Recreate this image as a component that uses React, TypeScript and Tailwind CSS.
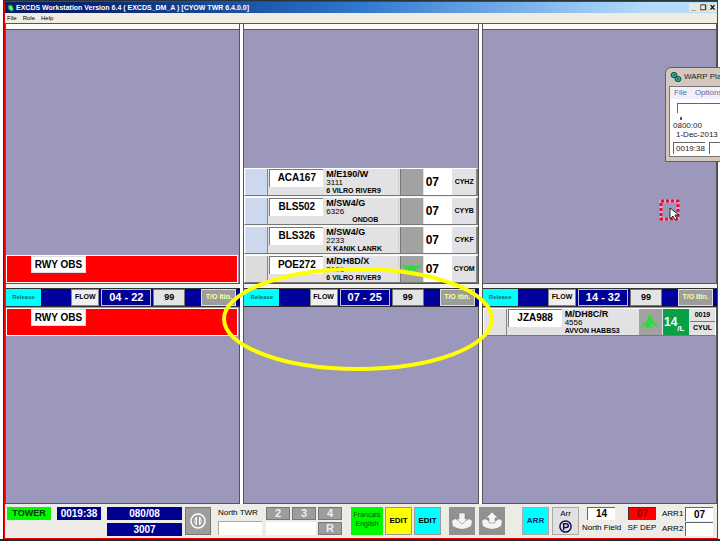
import React from 'react';

type Strip = { callsign: string; type: string; code: string; route: string; dest: string; blue?: boolean; plane?: boolean };

const strips: Strip[] = [
  { callsign: 'ACA167', type: 'M/E190/W', code: '3111', route: '6 VILRO RIVER9', dest: 'CYHZ', blue: true },
  { callsign: 'BLS502', type: 'M/SW4/G', code: '6326', route: 'ONDOB', dest: 'CYYB', blue: true },
  { callsign: 'BLS326', type: 'M/SW4/G', code: '2233', route: 'K KANIK LANRK', dest: 'CYKF', blue: true },
  { callsign: 'POE272', type: 'M/DH8D/X', code: '3103', route: '6 VILRO RIVER9', dest: 'CYOM', plane: true },
];

function ParkedPlane() {
  return (
    <svg viewBox="0 0 20 8" className="h-2 w-5" fill="#2ddb3c">
      <path d="M0 0 L6 2 L10 1 L14 2 L20 0 L17 4 L13 5 L16 8 L10 6 L4 8 L6 5 L2 4 Z" />
    </svg>
  );
}

function Plane() {
  return (
    <svg viewBox="0 0 18 16" className="h-4 w-[18px]" fill="#2ddb3c">
      <path d="M8 0 L11 3 L12 7 L17 11 L16 13 L11 10 L10 12 L13 15 L8 13 L5 15 L5 11 L1 13 L1 11 L6 7 Z" />
    </svg>
  );
}

function Callsign({ children }: { children: string }) {
  return (
    <div className="h-[18px] w-[54px] shrink-0 border-t border-l border-[#777] bg-white text-center text-[10px] font-bold leading-[16px]">
      {children}
    </div>
  );
}

function StripInfo({ type, code, route }: { type: string; code: string; route: string }) {
  return (
    <div className="w-[54px] shrink-0 whitespace-nowrap pl-0.5 font-bold">
      <div className="text-[9px] leading-[10px]">{type}</div>
      <div className="text-[8px] font-medium leading-[8px]">{code}</div>
      <div className={route === 'ONDOB' ? 'text-right text-[7px] leading-[8px]' : 'text-[7px] leading-[8px]'}>{route}</div>
    </div>
  );
}

function FlightStrip({ strip }: { strip: Strip }) {
  return (
    <div className="flex min-h-0 flex-1 gap-px border border-t-white border-r-[#777] border-b-[#777] border-l-white bg-[#e2e2e4] pl-px">
      <div className={strip.blue ? 'w-[22px] shrink-0 border-r border-[#888] bg-[#cbd8ee]' : 'w-[22px] shrink-0 border-r border-[#888] bg-[#dcdcdc]'} />
      <Callsign>{strip.callsign}</Callsign>
      <StripInfo type={strip.type} code={strip.code} route={strip.route} />
      <div className="flex-1 border-r border-[#d0d0d0]" />
      <div className="flex w-[23px] shrink-0 justify-center border-l border-[#777] bg-[#a2a2a2] pt-2">
        {strip.plane && <ParkedPlane />}
      </div>
      <div className="flex w-[28px] shrink-0 items-center bg-white pl-0.5 text-[12px] font-bold">07</div>
      <div className="flex w-[24px] shrink-0 items-center justify-center border-r border-[#888] text-[7px] font-bold">{strip.dest}</div>
    </div>
  );
}

function Obstruction() {
  return (
    <div className="mr-px h-7 shrink-0 border border-white bg-[#fe0000] pl-6">
      <div className="h-[17px] w-[55px] border border-[#ddd] bg-white text-center text-[10px] font-bold leading-[16px]">RWY OBS</div>
    </div>
  );
}

function RunwayBar({ runway }: { runway: string }) {
  return (
    <div className="flex h-[19px] shrink-0 border-y border-[#333] bg-[#00009a] pr-1">
      <button className="w-[35px] bg-[#00ffff] text-[6px] font-bold text-[#176b74]">Release</button>
      <div className="flex-1" />
      <button className="w-[28px] border border-[#888] bg-[#efefef] text-[7px] font-bold">FLOW</button>
      <button className="ml-0.5 w-[50px] border border-[#bdc2e5] bg-[#000096] text-[11px] font-bold leading-[14px] text-white">{runway}</button>
      <button className="ml-0.5 w-[32px] border border-[#777] bg-[#e4e4e4] text-[9px] font-bold">99</button>
      <button className="ml-4 w-[35px] border border-[#ddd] bg-[#9d9d9d] text-[7px] font-bold text-[#ffffa0]">T/O Itin.</button>
    </div>
  );
}

function Bay({ className, children }: { className: string; children?: React.ReactNode }) {
  return <div className={`flex min-h-0 flex-col border-r border-b border-[#555] bg-[#9c98bc] ${className}`}>{children}</div>;
}

function Column({ runway, top, bottom, children }: { runway: string; top?: React.ReactNode; bottom?: React.ReactNode; children?: React.ReactNode }) {
  return (
    <section className="relative flex min-w-0 flex-1 flex-col border-l border-[#555] bg-white">
      <div className="h-[6px] shrink-0 border-r border-b border-[#555] bg-[#fbfaf6]" />
      <Bay className="flex-[254] justify-end">{top}</Bay>
      <div className="h-1 shrink-0 bg-[#f2f1ee]" />
      <div className="relative">
        <RunwayBar runway={runway} />
        {children}
      </div>
      <Bay className="flex-[196] pt-px">{bottom}</Bay>
    </section>
  );
}

function Cursor() {
  return (
    <svg viewBox="0 0 22 22" className="absolute top-[199px] left-[659px] h-[22px] w-[22px]">
      <rect x="2" y="2" width="17" height="18" fill="none" stroke="#e8a5bd" strokeWidth="3" />
      <rect x="2" y="2" width="17" height="18" fill="none" stroke="#dd123c" strokeWidth="3" strokeDasharray="3 2" />
      <path d="M11 9 V20 L14 17 L16 21 L18 20 L16 16 H20 Z" fill="white" stroke="#222" />
    </svg>
  );
}

function WarpPlayer() {
  return (
    <aside className="absolute top-[67px] left-[665px] h-[95px] w-[130px] rounded-t-md border border-[#665f59] bg-[#d3c8bb] px-[3px] text-[8px] text-[#222]">
      <div className="flex h-[18px] items-center gap-0.5 whitespace-nowrap pl-px">
        <svg viewBox="0 0 12 12" className="h-3 w-3" stroke="#164642">
          <ellipse cx="4" cy="4" rx="3" ry="2.6" fill="#26b39c" />
          <ellipse cx="8" cy="8" rx="3" ry="2.6" fill="#26b39c" />
          <path d="M3 4 H5 M7 8 H9" />
        </svg>
        WARP Play
      </div>
      <div className="h-[71px] overflow-hidden border border-[#777] bg-white">
        <nav className="flex h-3 items-center gap-2 bg-[#f1f0fa] pl-1 text-[#63699a]">
          <a href="#file">File</a>
          <a href="#options">Options</a>
        </nav>
        <div className="mt-1 ml-[7px] h-[10px] border-t border-l border-[#666]" />
        <div className="mt-1 ml-[10px] h-[3px] w-0.5 bg-[#555]" />
        <div className="pt-px pl-[3px] leading-[9px]">0800:00</div>
        <div className="pl-1.5 leading-[9px]">1-Dec-2013</div>
        <div className="mt-[3px] flex gap-1 pl-[3px]">
          <div className="h-3 w-8 border-t border-l border-[#666] pl-0.5 leading-[11px]">0019:38</div>
          <div className="h-3 w-12 border-t border-l border-[#666]" />
        </div>
      </div>
    </aside>
  );
}

function Hand({ up }: { up?: boolean }) {
  return (
    <svg viewBox="0 0 26 28" className="h-7 w-[26px]" fill="#f4f4f4">
      <path d="M3 14 L6 12 L10 14 L17 14 L20 12 L23 14 L22 19 Q13 25 4 19 Z" />
      {up ? (
        <path d="M13 5 L19 11 H16 V16 H10 V11 H7 Z" stroke="#888" strokeWidth="0.6" />
      ) : (
        <path d="M10 6 H16 V12 H19 L13 17 L7 12 H10 Z" stroke="#888" strokeWidth="0.6" />
      )}
    </svg>
  );
}

const grey = 'border border-[#777] bg-[#9d9d9d] text-[11px] font-bold leading-[11px] text-[#eee]';
const field = 'border-t border-l border-[#666] bg-white text-center text-[10px] font-bold leading-[12px]';

function Footer() {
  return (
    <footer className="flex h-[34px] shrink-0 items-start bg-[#eeece6] pt-[3px] pl-0.5 text-[8px] font-bold">
      <button className="h-[13px] w-[44px] bg-[#00f800] text-[9px] leading-[13px] text-[#06370a]">TOWER</button>
      <div className="ml-[6px] h-[13px] w-[44px] bg-[#000090] text-center text-[10px] leading-[13px] text-white">0019:38</div>
      <div className="ml-[6px] grid w-[75px] gap-[3px] text-center text-[10px] leading-[13px] text-white">
        <div className="bg-[#000090]">080/08</div>
        <div className="bg-[#000090]">3007</div>
      </div>
      <button aria-label="Information" className="ml-[3px] flex h-7 w-[26px] items-center justify-center border border-[#777] bg-[#9d9d9d]">
        <svg viewBox="0 0 18 18" className="h-[18px] w-[18px]" fill="none" stroke="white">
          <circle cx="9" cy="9" r="7" strokeWidth="1.5" />
          <path d="M7.5 5 Q4 9 7.5 13 Z M10.5 5 Q14 9 10.5 13 Z" />
        </svg>
      </button>
      <label className="ml-1 w-[46px] pl-[3px]">
        <span className="block h-[14px] whitespace-nowrap leading-[12px] font-medium">North TWR</span>
        <input className="block h-[14px] w-[44px] border-t border-l border-[#aaa] bg-white" />
      </label>
      <div className="ml-[5px] grid grid-cols-[24px_24px_24px] gap-x-0.5 gap-y-0.5">
        <button className={`${grey} h-[13px]`}>2</button>
        <button className={`${grey} h-[13px]`}>3</button>
        <button className={`${grey} h-[13px]`}>4</button>
        <input aria-label="Message" className="col-span-2 h-[13px] w-full bg-white" />
        <button className={`${grey} h-[13px]`}>R</button>
      </div>
      <button className="ml-[9px] h-7 w-8 bg-[#00f800] pb-1 text-[7px] leading-[9px] font-medium text-[#075c08]">Francais<br />English</button>
      <button className="ml-[2px] h-7 w-[27px] border border-[#999] bg-[#ffff00] text-[8px]">EDIT</button>
      <button className="ml-[2px] h-7 w-[27px] border border-[#999] bg-[#00ffff] text-[8px]">EDIT</button>
      <button aria-label="Receive" className="ml-2 h-7 w-[26px] bg-[#919191]"><Hand /></button>
      <button aria-label="Send" className="ml-1 h-7 w-[26px] bg-[#919191]"><Hand up /></button>
      <div className="flex-1" />
      <button className="h-7 w-[27px] border border-[#aaa] bg-[#00ffff] text-[8px] text-[#073078]">ARR</button>
      <button className="ml-[3px] flex h-7 w-[27px] flex-col items-center border border-[#aaa] bg-[#e1e1e4] font-medium">
        Arr
        <svg viewBox="0 0 14 14" className="h-[13px] w-[13px]" fill="none" stroke="#10104c" strokeWidth="1.6">
          <circle cx="7" cy="7" r="6" />
          <path d="M5 11 V4 H8 Q10 4 10 6 Q10 8 8 8 H5" />
        </svg>
      </button>
      <div className="ml-[3px] w-[38px] text-center font-medium">
        <div className={`${field} mx-auto h-[13px] w-7`}>14</div>
        <div className="whitespace-nowrap pt-0.5">North Field</div>
      </div>
      <div className="ml-1.5 w-8 text-center font-medium">
        <div className="mx-auto h-[13px] w-7 border-t border-l border-[#333] bg-[#ff0000] text-[10px] font-bold leading-[12px] text-[#850000]">07</div>
        <div className="whitespace-nowrap pt-0.5">SF DEP</div>
      </div>
      <div className="mr-1 ml-1 grid grid-cols-[23px_28px] gap-y-px font-medium leading-[13px]">
        <label htmlFor="arr1">ARR1</label>
        <input id="arr1" defaultValue="07" className={`${field} h-[14px] w-full`} />
        <label htmlFor="arr2">ARR2</label>
        <input id="arr2" className={`${field} h-[14px] w-full`} />
      </div>
    </footer>
  );
}

export default function App() {
  return (
    <div className="relative flex h-screen flex-col overflow-hidden border-b-2 border-[#1b2c30] bg-white pr-0.5 pl-[3px] font-['Liberation_Sans',Arial,sans-serif] text-black">
      <div className="flex min-h-0 flex-1 flex-col border-t border-l border-[#263337]">
        <main className="flex min-h-0 flex-1 flex-col border border-[#f00000]">
          <header className="flex h-[11px] shrink-0 items-center bg-linear-to-r from-[#08206c] from-10% via-[#2f78d0] via-50% to-[#b3dcfb] to-90% pl-0.5 text-[7px] font-bold leading-[10px] text-white">
            <svg viewBox="0 0 8 8" className="mr-px h-2 w-2"><path d="M1 1 H5 L7 5 L5 8 L1 5 Z" fill="#58e779" stroke="#142" /></svg>
            <h1 className="flex-1">EXCDS Workstation Version 6.4 ( EXCDS_DM_A ) [CYOW TWR 6.4.0.0]</h1>
            <button aria-label="Minimize" className="h-[9px] w-[9px] bg-[#e7e7e0] text-[8px] leading-[7px] text-black">_</button>
            <button aria-label="Restore" className="h-[9px] w-[9px] bg-[#e7e7e0] text-[7px] leading-[9px] text-black">❐</button>
            <button aria-label="Close" className="ml-px h-[9px] w-[9px] bg-[#e7e7e0] text-[10px] leading-[9px] text-black">×</button>
          </header>
          <nav className="flex h-[11px] shrink-0 items-center gap-1.5 border-b border-[#555] bg-[#efede1] pl-0.5 text-[6px]">
            <a href="#file">File</a>
            <a href="#role">Role</a>
            <a href="#help">Help</a>
          </nav>
          <div className="flex min-h-0 flex-1 gap-[3px] bg-white">
            <Column runway="04 - 22" top={<Obstruction />} bottom={<Obstruction />} />
            <Column
              runway="07 - 25"
              top={<div className="flex h-[115px] shrink-0 flex-col gap-px bg-[#f4f4f4]">{strips.map((s) => <FlightStrip key={s.callsign} strip={s} />)}</div>}
            >
              <svg viewBox="0 0 272 104" className="pointer-events-none absolute -top-[21px] -left-[22px] z-10 h-[104px] w-[272px]">
                <ellipse cx="136" cy="52" rx="134" ry="50" fill="none" stroke="#ffff00" strokeWidth="4" />
              </svg>
            </Column>
            <Column
              runway="14 - 32"
              bottom={
                <div className="flex h-7 shrink-0 gap-px border border-white border-b-[#777] bg-[#e2e2e4] pl-px">
                  <div className="w-[22px] shrink-0 border-r border-[#888]" />
                  <Callsign>JZA988</Callsign>
                  <StripInfo type="M/DH8C/R" code="4556" route="AVVON HABBS3" />
                  <div className="flex-1" />
                  <div className="flex w-[23px] shrink-0 items-center justify-center bg-[#a2a2a2]"><Plane /></div>
                  <div className="flex w-[26px] shrink-0 bg-[#08a148] pl-px text-[12px] font-bold leading-[26px] text-white">
                    14<span className="self-end text-[8px] leading-[12px]">/L</span>
                  </div>
                  <div className="grid w-[25px] shrink-0 text-center text-[7px] font-bold leading-[12px]">
                    <div className="border-b border-[#777]">0019</div>
                    <div>CYUL</div>
                  </div>
                </div>
              }
            />
          </div>
          <Footer />
        </main>
      </div>
      <WarpPlayer />
      <Cursor />
    </div>
  );
}
